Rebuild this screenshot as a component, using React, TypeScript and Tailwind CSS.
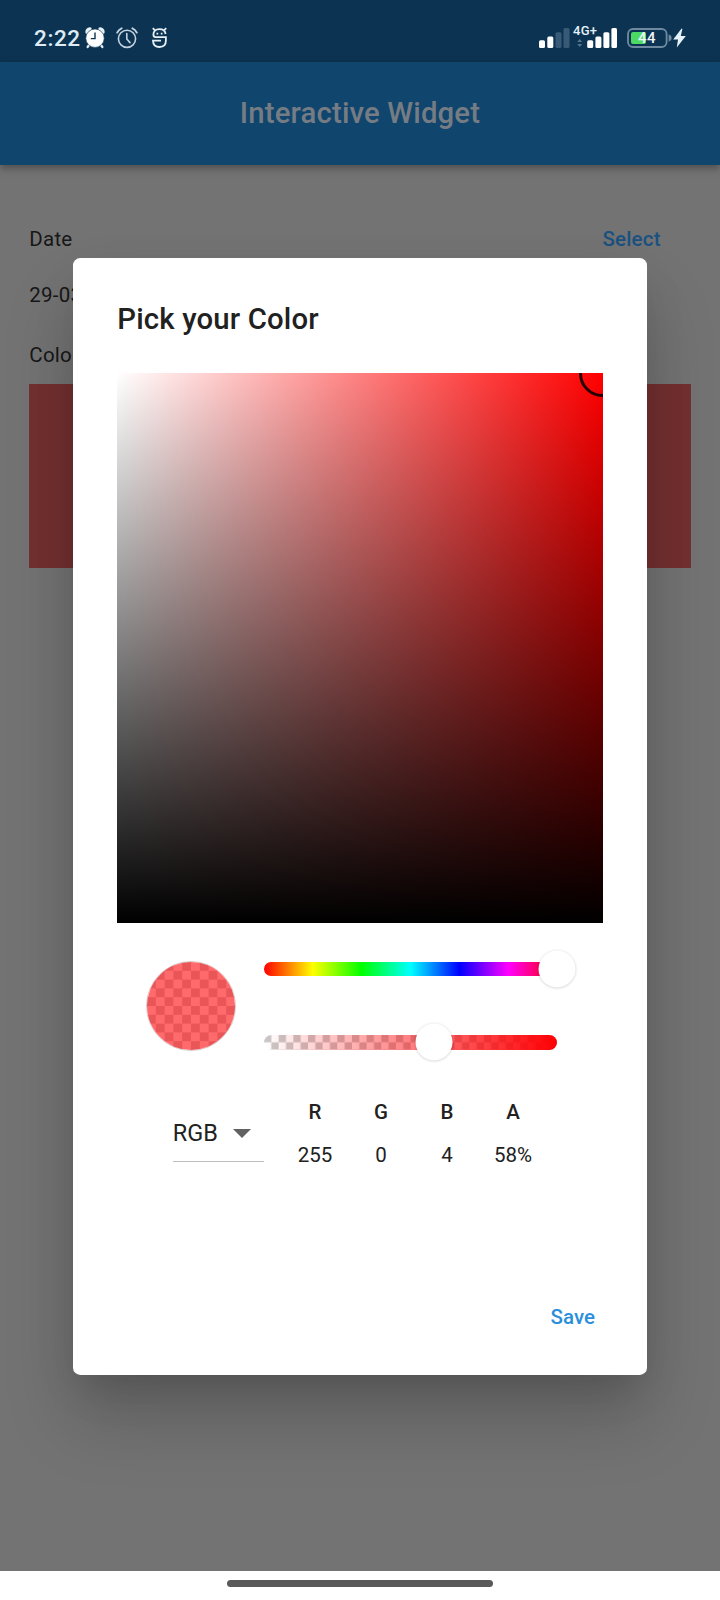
import React from "react";

const channels = [
  { label: "R", value: "255" },
  { label: "G", value: "0" },
  { label: "B", value: "4" },
  { label: "A", value: "58%" },
];

function SolidAlarm() {
  return (
    <svg className="h-[22px] w-[20px]" viewBox="0 0 20 22">
      <g fill="none" stroke="#e6f0f7" strokeLinecap="round">
        <path d="M2 5.2 Q2.2 2.3 5 2" strokeWidth="3.4" />
        <path d="M18 5.2 Q17.8 2.3 15 2" strokeWidth="3.4" />
        <path d="M4.5 17.5 L2.6 20 M15.5 17.5 L17.4 20" strokeWidth="2.2" />
      </g>
      <circle cx="10" cy="11.2" r="9.2" fill="#fff" stroke="#0c3452" strokeWidth="0.6" />
      <path d="M10 5.5 V11.6 H5.8" fill="none" stroke="#0c3452" strokeWidth="1.4" />
    </svg>
  );
}

function OutlineAlarm() {
  return (
    <svg className="h-[22px] w-[22px]" viewBox="0 0 22 22" fill="none" stroke="#c3d2de" strokeWidth="1.6" strokeLinecap="round">
      <circle cx="11" cy="11.8" r="8.6" />
      <path d="M1.2 5.6 Q2.6 2.6 5.6 1.3 M20.8 5.6 Q19.4 2.6 16.4 1.3" strokeWidth="1.9" />
      <path d="M10.8 6.6 V12 L14 15.6" />
    </svg>
  );
}

function RobotS() {
  return (
    <svg className="h-[22px] w-[17px]" viewBox="0 0 17 22" fill="none" stroke="#e6f0f7" strokeWidth="1.8">
      <path d="M1.8 1.2 L4 3.4 M15.2 1.2 L13 3.4" />
      <path d="M14.6 7 Q13.8 2.2 8.5 2.2 Q2.4 2.2 2.4 7.6 Q2.4 10.2 4.6 10.2 H14.9 V13.6 Q14.9 20 8.5 20 Q2.2 20 2 13.6 H10" />
      <path d="M5.5 6.6 H7.2 M9.8 6.6 H11.5" strokeWidth="1.7" />
    </svg>
  );
}

function StatusBar() {
  return (
    <header className="flex h-[62px] justify-between bg-[#0c3452] pl-[34px] pr-[34px] pt-[27px]">
      <div className="flex h-[22px] items-center">
        <span className="w-[51px] whitespace-nowrap text-[22.5px] font-medium leading-[22px] tracking-[0.6px] text-[#dfebf4]">2:22</span>
        <SolidAlarm />
        <span className="w-[11px]" />
        <OutlineAlarm />
        <span className="w-[13px]" />
        <RobotS />
      </div>
      <div className="flex h-[22px] items-start">
        <svg className="h-[22px] w-[31px]" viewBox="0 0 31 22">
          <rect x="0" y="13.3" width="6" height="7.7" rx="1.5" fill="#fff" />
          <rect x="8.3" y="9.5" width="6" height="11.5" rx="1.5" fill="#fff" />
          <rect x="16.5" y="5.3" width="6" height="15.7" rx="1.5" fill="#395a76" />
          <rect x="24.5" y="1" width="6" height="20" rx="1.5" fill="#395a76" />
        </svg>
        <div className="relative ml-[5px] h-[22px] w-[42px]">
          <svg className="h-[22px] w-[42px]" viewBox="0 0 42 22">
            <path d="M2.2 15 L4.7 12 L7.2 15Z M2.2 17 L4.7 20 L7.2 17Z" fill="#54758f" />
            <rect x="12.2" y="13.3" width="6" height="7.7" rx="1.5" fill="#fff" />
            <rect x="20.4" y="9.5" width="6" height="11.5" rx="1.5" fill="#fff" />
            <rect x="28.4" y="5.3" width="6" height="15.7" rx="1.5" fill="#fff" />
            <rect x="36.4" y="1" width="5.6" height="20" rx="1.5" fill="#fff" />
          </svg>
          <span className="absolute -left-[2px] -top-[3px] text-[13px] font-medium leading-[13px] tracking-[0.3px] text-[#e6f0f7]">4G+</span>
        </div>
        <div className="relative ml-[10px] h-[22px] w-[46px]">
          <svg className="h-[22px] w-[46px]" viewBox="0 0 46 22">
            <rect x="1" y="2" width="38.6" height="18" rx="5" fill="none" stroke="#6f8aa0" strokeWidth="1.8" />
            <rect x="4" y="5" width="15" height="12" rx="2" fill="#4cd964" />
            <path d="M41.6 7.6 Q44.6 8.4 44.6 11 Q44.6 13.6 41.6 14.4Z" fill="#6f8aa0" />
          </svg>
          <span className="absolute left-0 top-[4px] w-[40px] text-center text-[15px] font-medium leading-[15px] tracking-[0.4px] text-[#f0f5f9]">44</span>
        </div>
        <svg className="h-[22px] w-[13px]" viewBox="0 0 13 22">
          <path d="M8.6 1.6 L0.2 12.4 H5 L3.8 20.6 L12.8 9 H7.8 L9.4 1.9Z" fill="#e6f0f7" />
        </svg>
      </div>
    </header>
  );
}

function Checker({ id, cell, tone }: { id: string; cell: number; tone: string }) {
  return (
    <svg className="block h-full w-full">
      <defs>
        <pattern id={id} width={cell * 2} height={cell * 2} patternUnits="userSpaceOnUse">
          <rect width={cell * 2} height={cell * 2} fill="#fff" />
          <rect width={cell} height={cell} fill={tone} />
          <rect x={cell} y={cell} width={cell} height={cell} fill={tone} />
        </pattern>
      </defs>
      <rect width="100%" height="100%" fill={`url(#${id})`} />
    </svg>
  );
}

const thumb = "absolute top-1/2 h-[37px] w-[37px] -translate-x-1/2 -translate-y-1/2 rounded-full bg-white shadow-[0_0.5px_3px_rgba(0,0,0,0.2)]";

function ColorDialog() {
  return (
    <section className="absolute left-[73.3px] top-[258px] flex h-[1116.5px] w-[573.4px] flex-col rounded-[7.3px] bg-white px-[44px] shadow-[0_44px_70px_0_rgba(0,0,0,0.18),0_17px_50px_-4px_rgba(0,0,0,0.07),0_20px_27px_-13px_rgba(0,0,0,0.07)]">
      <h2 className="mt-[43px] h-[36px] text-[29.33px] font-medium leading-[36px] tracking-[0.16px] text-[#212121]">Pick your Color</h2>
      <div className="relative mt-[36.3px] h-[550px] shrink-0 overflow-hidden bg-[linear-gradient(to_bottom,transparent,#000),linear-gradient(to_right,#fff,#f00)]">
        <div className="absolute -right-[23.6px] -top-[23.6px] h-[47.2px] w-[47.2px] rounded-full border-[3.6px] border-black/85" />
      </div>
      <div className="mt-[37.5px] flex h-[90px] shrink-0 items-center pl-[28.7px]">
        <div className="relative h-[90px] w-[90px] overflow-hidden rounded-full border border-[#d8cccc]">
          <Checker id="preview-checks" cell={8.8} tone="#ccc" />
          <div className="absolute inset-0 bg-[#ff0004]/58" />
        </div>
        <div className="ml-[28px] flex h-[88px] w-[292.7px] flex-col justify-between">
          <div className="relative h-[14.7px] rounded-full bg-[linear-gradient(to_right,#f00,#ff0,#0f0,#0ff,#00f,#f0f,#f00)]">
            <div className={`${thumb} left-full`} />
          </div>
          <div className="relative h-[14.7px]">
            <div className="relative h-full overflow-hidden rounded-full">
              <Checker id="alpha-checks" cell={7.33} tone="#c8c8c8" />
              <div className="absolute inset-0 bg-[linear-gradient(to_right,rgba(255,0,4,0),rgb(255,0,4))]" />
            </div>
            <div className={`${thumb} left-[58%]`} />
          </div>
        </div>
      </div>
      <div className="mt-[44.5px] flex h-[76px] shrink-0 pl-[55.4px]">
        <button className="mt-[7px] flex h-[60px] w-[91.3px] items-center border-b border-[#bdbdbd] pt-[3px] text-[23.47px] tracking-[0.1px] text-[#212121]">
          RGB
          <svg className="ml-[15px] h-[9px] w-[18px]" viewBox="0 0 18 9"><path d="M0 0H18L9 9Z" fill="#616161" /></svg>
        </button>
        <div className="ml-[18px] grid w-[264px] grid-cols-4 text-center text-[20.5px] leading-[24px] text-[#212121]">
          {channels.map((c) => (
            <div key={c.label} className="flex flex-col gap-[19px] pt-[5px]">
              <span className="font-medium">{c.label}</span>
              <span>{c.value}</span>
            </div>
          ))}
        </div>
      </div>
      <button className="ml-auto mr-[7.5px] mt-[134px] text-[20.5px] font-medium leading-[24px] tracking-[0.1px] text-[#2b8fdb]">Save</button>
    </section>
  );
}

export default function App() {
  return (
    <div className="relative flex h-[1600px] w-[720px] flex-col overflow-hidden bg-[#737373] font-['Roboto',sans-serif]">
      <StatusBar />
      <div className="flex h-[102.5px] shrink-0 items-center justify-center bg-[#10456e] pt-[2px] text-[29.33px] font-medium tracking-[0.15px] text-[#757c83] shadow-[0_3px_8px_rgba(0,0,0,0.34)]">
        Interactive Widget
      </div>
      <main className="flex flex-1 flex-col px-[29.3px] text-[20.5px] leading-[24px] tracking-[0.25px] text-[#171717]">
        <div className="mt-[62px] flex justify-between pr-[30px]">
          <span>Date</span>
          <button className="font-medium tracking-[0.2px] text-[#1a5181]">Select</button>
        </div>
        <span className="mt-[32.5px]">29-03-2023</span>
        <span className="mt-[36.4px]">Color</span>
        <div className="mt-[17.1px] h-[183.3px] bg-[#733030]" />
      </main>
      <ColorDialog />
      <footer className="relative flex h-[29.3px] shrink-0 justify-center bg-white pt-[9.3px]">
        <div className="h-[7px] w-[266px] rounded-full bg-[#5a5a5a]" />
      </footer>
    </div>
  );
}
